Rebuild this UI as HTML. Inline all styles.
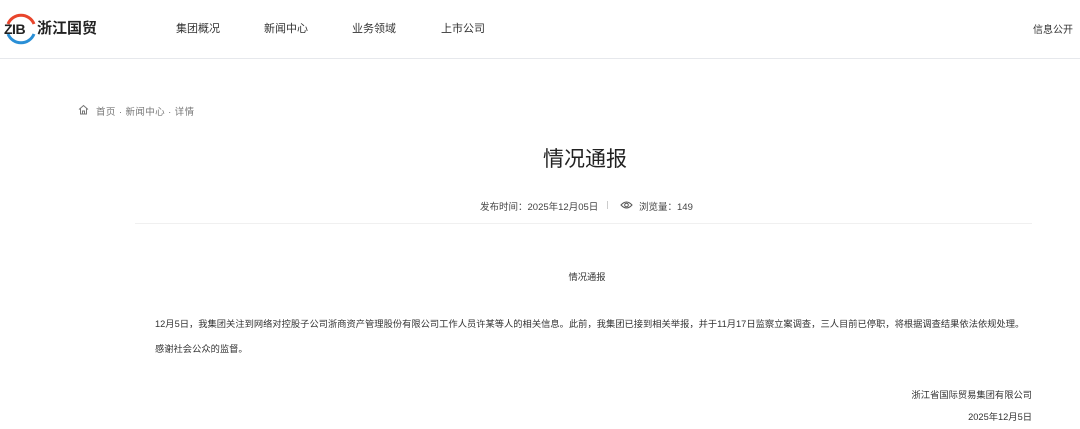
<!DOCTYPE html>
<html><head><meta charset="utf-8"><style>
*{margin:0;padding:0;box-sizing:border-box}
body{width:1080px;height:429px;background:#fff;font-family:"Liberation Sans","Noto Sans CJK SC",sans-serif;color:#333;position:relative;overflow:hidden}
.abs{position:absolute;white-space:nowrap}
.hdr{position:absolute;left:0;top:0;width:1080px;height:59px;border-bottom:1px solid #e6e8ec}
.nav{font-size:11px;color:#333;top:20px}
.c{font-size:9.27px;color:#333}
</style></head><body>
<div class="hdr"></div>
<svg class="abs" style="left:3px;top:13px" width="36" height="32" viewBox="0 0 36 32">
<path d="M5 11 A14 14 0 0 1 31 11" stroke="#e8452c" stroke-width="3" fill="none"/>
<path d="M5 21 A14 14 0 0 0 31 21" stroke="#2a8fd6" stroke-width="3" fill="none"/>
<text x="1" y="21" font-family="Liberation Sans" font-weight="bold" font-size="14" fill="#222" letter-spacing="-0.5">ZIB</text>
</svg>
<div class="abs" style="left:37px;top:17px;font-size:15px;font-weight:bold;color:#222">浙江国贸</div>
<div class="abs nav" style="left:176px">集团概况</div>
<div class="abs nav" style="left:264px">新闻中心</div>
<div class="abs nav" style="left:352px">业务领域</div>
<div class="abs nav" style="left:441px">上市公司</div>
<div class="abs" style="left:1033px;top:21px;font-size:10px">信息公开</div>
<svg class="abs" style="left:78px;top:104px" width="11" height="11" viewBox="0 0 11 11"><path d="M1 5.5L5.5 1.5 10 5.5M2.5 4.5V10h6V4.5M4.5 10V7h2v3" stroke="#777" fill="none" stroke-width="1"/></svg>
<div class="abs" style="left:96px;top:104px;font-size:9.5px;color:#777;letter-spacing:0.4px">首页 · 新闻中心 · 详情</div>
<div class="abs" style="left:135px;width:900px;top:143px;text-align:center;font-size:21px;color:#222">情况通报</div>
<div class="abs" style="left:480px;top:199px;font-size:9.5px;color:#444">发布时间：2025年12月05日</div>
<div class="abs" style="left:607px;top:201px;width:1px;height:8px;background:#ccc"></div>
<svg class="abs" style="left:620px;top:200px" width="13" height="10" viewBox="0 0 13 10"><path d="M1 5Q6.5-1 12 5Q6.5 11 1 5Z" stroke="#555" fill="none"/><circle cx="6.5" cy="5" r="1.8" stroke="#555" fill="none"/></svg>
<div class="abs" style="left:639px;top:199px;font-size:9.5px;color:#444">浏览量：149</div>
<div class="abs" style="left:135px;top:223px;width:897px;height:1px;background:#f0f0f0"></div>
<div class="abs c" style="left:0;width:1174px;top:269px;text-align:center">情况通报</div>
<div class="abs c" style="left:155px;top:316px">12月5日，我集团关注到网络对控股子公司浙商资产管理股份有限公司工作人员许某等人的相关信息。此前，我集团已接到相关举报，并于11月17日监察立案调查，三人目前已停职，将根据调查结果依法依规处理。</div>
<div class="abs c" style="left:155px;top:341px">感谢社会公众的监督。</div>
<div class="abs c" style="right:48px;top:387px">浙江省国际贸易集团有限公司</div>
<div class="abs c" style="right:48px;top:409px">2025年12月5日</div>
</body></html>
